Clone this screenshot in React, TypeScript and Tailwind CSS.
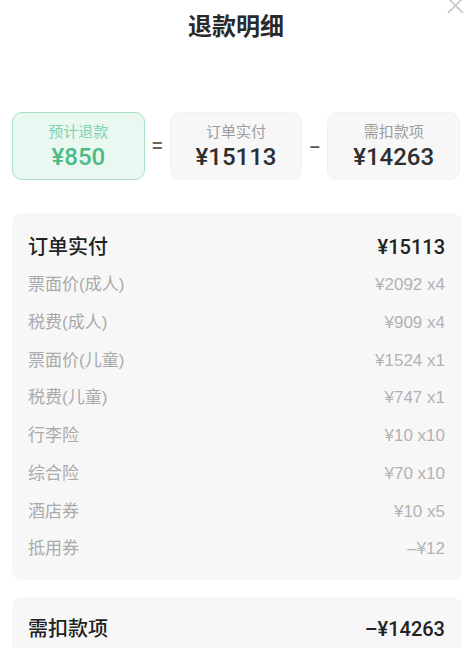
import React from 'react';

const font = { fontFamily: '"Liberation Sans", "Noto Sans CJK SC", sans-serif' };
const numFont = { fontFamily: 'Roboto, "Noto Sans CJK SC", sans-serif' };

const orderItems: [string, string][] = [
  ['票面价(成人)', '¥2092 x4'],
  ['税费(成人)', '¥909 x4'],
  ['票面价(儿童)', '¥1524 x1'],
  ['税费(儿童)', '¥747 x1'],
  ['行李险', '¥10 x10'],
  ['综合险', '¥70 x10'],
  ['酒店券', '¥10 x5'],
  ['抵用券', '–¥12'],
];

export default function App() {
  return (
    <div className="relative w-[472px] h-[648px] overflow-hidden bg-white" style={font}>
      <svg
        className="absolute left-[447px] top-[-3px]"
        width="17"
        height="17"
        viewBox="0 0 17 17"
        fill="none"
        stroke="#c4c4c4"
        strokeWidth="1.6"
      >
        <path d="M1 1L16 16M16 1L1 16" />
      </svg>

      <div className="pt-[11px] h-[43px] text-center">
        <h1 className="text-[24px] leading-[32px] font-bold text-[#2a2a2a]">退款明细</h1>
      </div>

      <div className="mt-[69px] px-[12px] flex items-center">
        <div className="w-[133px] h-[68px] rounded-[10px] bg-[#e9f9f1] border border-[#a9dfc5] flex flex-col items-center justify-center">
          <span className="text-[15px] leading-[22px] text-[#84d1ad]">预计退款</span>
          <span className="text-[24px] leading-[28px] font-medium text-[#4dbb88]" style={numFont}>¥850</span>
        </div>
        <span className="w-[25px] text-center text-[18px] font-bold text-[#666]">=</span>
        <div className="w-[133px] h-[68px] rounded-[10px] bg-[#f7f7f7] border border-[#f1f1f1] flex flex-col items-center justify-center">
          <span className="text-[15px] leading-[22px] text-[#9d9d9d]">订单实付</span>
          <span className="text-[24px] leading-[28px] font-medium text-[#2e2e2e]" style={numFont}>¥15113</span>
        </div>
        <span className="w-[25px] text-center text-[18px] font-bold text-[#555]">–</span>
        <div className="w-[133px] h-[68px] rounded-[10px] bg-[#f7f7f7] border border-[#f1f1f1] flex flex-col items-center justify-center">
          <span className="text-[15px] leading-[22px] text-[#9d9d9d]">需扣款项</span>
          <span className="text-[24px] leading-[28px] font-medium text-[#2e2e2e]" style={numFont}>¥14263</span>
        </div>
      </div>

      <div className="mt-[33px] ml-[12px] mr-[10px] rounded-[10px] bg-[#f7f7f7] pt-[15px] pb-[12px] pl-[16px] pr-[17px]">
        <div className="h-[38px] flex items-center justify-between text-[20px] font-medium text-[#222]">
          <span>订单实付</span>
          <span style={numFont}>¥15113</span>
        </div>
        {orderItems.map(([label, value]) => (
          <div key={label} className="h-[37.75px] flex items-center justify-between text-[17px] text-[#aaaaaa]">
            <span>{label}</span>
            <span className="text-[#b2b2b2]">{value}</span>
          </div>
        ))}
      </div>

      <div className="mt-[17px] ml-[12px] mr-[10px] rounded-[10px] bg-[#f7f7f7] pt-[13px] pb-[12px] pl-[16px] pr-[17px]">
        <div className="h-[38px] flex items-center justify-between text-[20px] font-medium text-[#222]">
          <span>需扣款项</span>
          <span style={numFont}>–¥14263</span>
        </div>
      </div>
    </div>
  );
}
